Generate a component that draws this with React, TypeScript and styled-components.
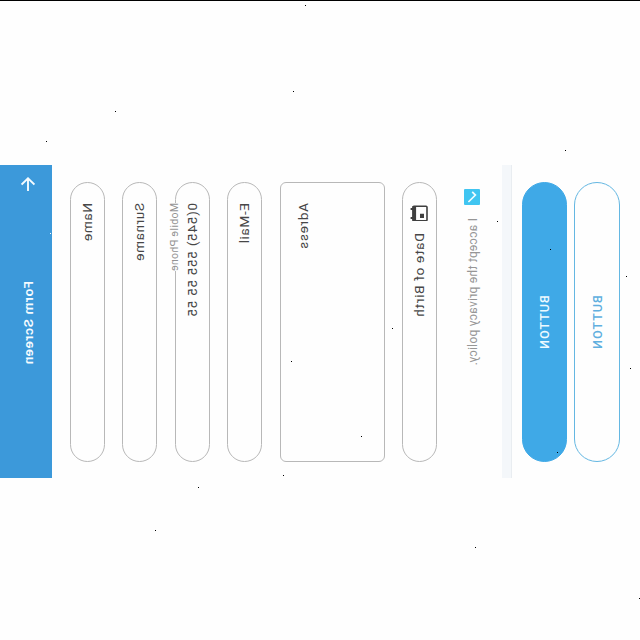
import React from "react";
import styled, { createGlobalStyle } from "styled-components";

const GlobalStyle = createGlobalStyle`
  * { box-sizing: border-box; }
  body { margin: 0; background: #fefefe; font-family: Roboto, "Liberation Sans", sans-serif; overflow: hidden; }
`;

const Page = styled.main`
  position: relative;
  width: 640px;
  height: 640px;
  padding-top: 164px;
  border-top: 1px solid #000;
  background: #fefefe;
  overflow: hidden;
`;

/* An upright phone form, flipped across its main diagonal. */
const Phone = styled.form`
  display: flex;
  flex-direction: column;
  width: 313px;
  height: 640px;
  transform: matrix(0, 1, 1, 0, 0, 0);
  transform-origin: 0 0;
`;

const Header = styled.header`
  display: grid;
  grid-template-columns: 38px 1fr 38px;
  align-items: center;
  flex: none;
  height: 52.4px;
  padding-top: 3px;
  background: #3c99da;
  color: #f4fbff;
`;

const BackIcon = styled.svg`
  display: block;
  margin-left: 12px;
`;

const Title = styled.h1`
  margin: 0;
  padding-left: 3px;
  text-align: center;
  font-size: 13.5px;
  line-height: 20px;
  font-weight: 600;
  letter-spacing: 0.65px;
`;

const Fields = styled.div`
  display: flex;
  flex-direction: column;
  gap: 17.4px;
  padding: 17.6px 16px 0 17px;
`;

const Field = styled.div<{ $tall?: boolean }>`
  position: relative;
  display: flex;
  align-items: ${(p) => (p.$tall ? "flex-start" : "center")};
  gap: 12px;
  flex: none;
  height: ${(p) => (p.$tall ? 105 : 35)}px;
  padding: ${(p) => (p.$tall ? "12px 20px" : "0 20px 1px")};
  border: 1px solid #b8b8b8;
  border-radius: ${(p) => (p.$tall ? 6 : 28)}px;
`;

const Value = styled.span<{ $space?: number }>`
  color: #474747;
  font-size: 13.5px;
  line-height: 20px;
  letter-spacing: ${(p) => p.$space ?? 0.65}px;
  white-space: nowrap;
`;

const FloatLabel = styled.span`
  position: absolute;
  left: 20px;
  top: -8px;
  background: #fefefe;
  color: #929292;
  font-size: 10.5px;
  line-height: 14px;
  letter-spacing: 0.35px;
  white-space: nowrap;
`;

const Consent = styled.label`
  display: flex;
  align-items: center;
  gap: 13px;
  flex: none;
  height: 20px;
  margin: 25px 0 0 24px;
`;

const ConsentText = styled.span`
  padding-top: 2px;
  color: #969696;
  font-size: 12px;
  letter-spacing: 0.27px;
  white-space: nowrap;
`;

const Divider = styled.div`
  flex: none;
  height: 9.6px;
  margin-top: 20.4px;
  background: #f4f7fa;
  border-bottom: 1px solid #e9edf1;
`;

const Actions = styled.div`
  display: flex;
  flex-direction: column;
  gap: 7px;
  padding: 10px 16px 0 17px;
`;

const Button = styled.button<{ $outline?: boolean }>`
  height: 45.4px;
  padding: 1px 0 0 1px;
  border: 1px solid ${(p) => (p.$outline ? "#64b7e2" : "#3fa9e7")};
  border-radius: 30px;
  background: ${(p) => (p.$outline ? "#fefefe" : "#3fa9e7")};
  color: ${(p) => (p.$outline ? "#60afdf" : "#eefaff")};
  font: 500 12.5px/18px Roboto, "Liberation Sans", sans-serif;
  letter-spacing: 1px;
`;

const Specks = styled.svg`
  position: absolute;
  left: 0;
  top: -1px;
  pointer-events: none;
`;

const SPECKS: [number, number][] = [
  [305, 5], [293, 91], [115, 111], [46, 141], [565, 150], [497, 221], [550, 249],
  [626, 276], [392, 328], [291, 361], [630, 368], [361, 436], [557, 452],
  [283, 475], [198, 487], [155, 530], [475, 547], [639, 598],
];

export default function App() {
  return (
    <>
      <GlobalStyle />
      <Page>
        <Phone>
          <Header>
            <BackIcon width="14" height="14" viewBox="0 0 14 14" fill="none" stroke="currentColor" strokeWidth="1.9">
              <path d="M14 7H1.5M7.5 .6L1.3 7l6.2 6.4" />
            </BackIcon>
            <Title>Form Screen</Title>
          </Header>
          <Fields>
            <Field><Value>Name</Value></Field>
            <Field><Value>Surname</Value></Field>
            <Field>
              <FloatLabel>Mobile Phone</FloatLabel>
              <Value $space={0.7}>0(545) 555 55 55</Value>
            </Field>
            <Field><Value>E-Mail</Value></Field>
            <Field $tall><Value $space={0.75}>Adress</Value></Field>
            <Field>
              <svg width="18" height="18" viewBox="0 0 18 18">
                <path d="M6 .6v3M15 .6v3" stroke="#3f3f3f" strokeWidth="1.9" />
                <rect x="3.3" y="3" width="14.4" height="14" rx="1" fill="none" stroke="#3f3f3f" strokeWidth="1.6" />
                <path d="M3 2.5h15v3.6H3zM10.8 10h4.2v4h-4.2z" fill="#3f3f3f" />
              </svg>
              <Value $space={0.7}>Date of Birth</Value>
            </Field>
          </Fields>
          <Consent>
            <svg width="16" height="16" viewBox="0 0 16 16">
              <rect width="16" height="16" rx="1" fill="#40c5f1" />
              <path d="M2.8 8.2l3.3 3.2L13 4.4" fill="none" stroke="#effcff" strokeWidth="1.7" />
            </svg>
            <ConsentText>I accept the privacy policy.</ConsentText>
          </Consent>
          <Divider />
          <Actions>
            <Button type="button">BUTTON</Button>
            <Button type="button" $outline>BUTTON</Button>
          </Actions>
        </Phone>
        <Specks width="640" height="640" shapeRendering="crispEdges">
          {SPECKS.map(([x, y]) => (
            <rect key={`${x}-${y}`} x={x} y={y} width="1" height="1" fill="#000" />
          ))}
          <rect x="50" y="233" width="1" height="1" fill="#fff" />
        </Specks>
      </Page>
    </>
  );
}
